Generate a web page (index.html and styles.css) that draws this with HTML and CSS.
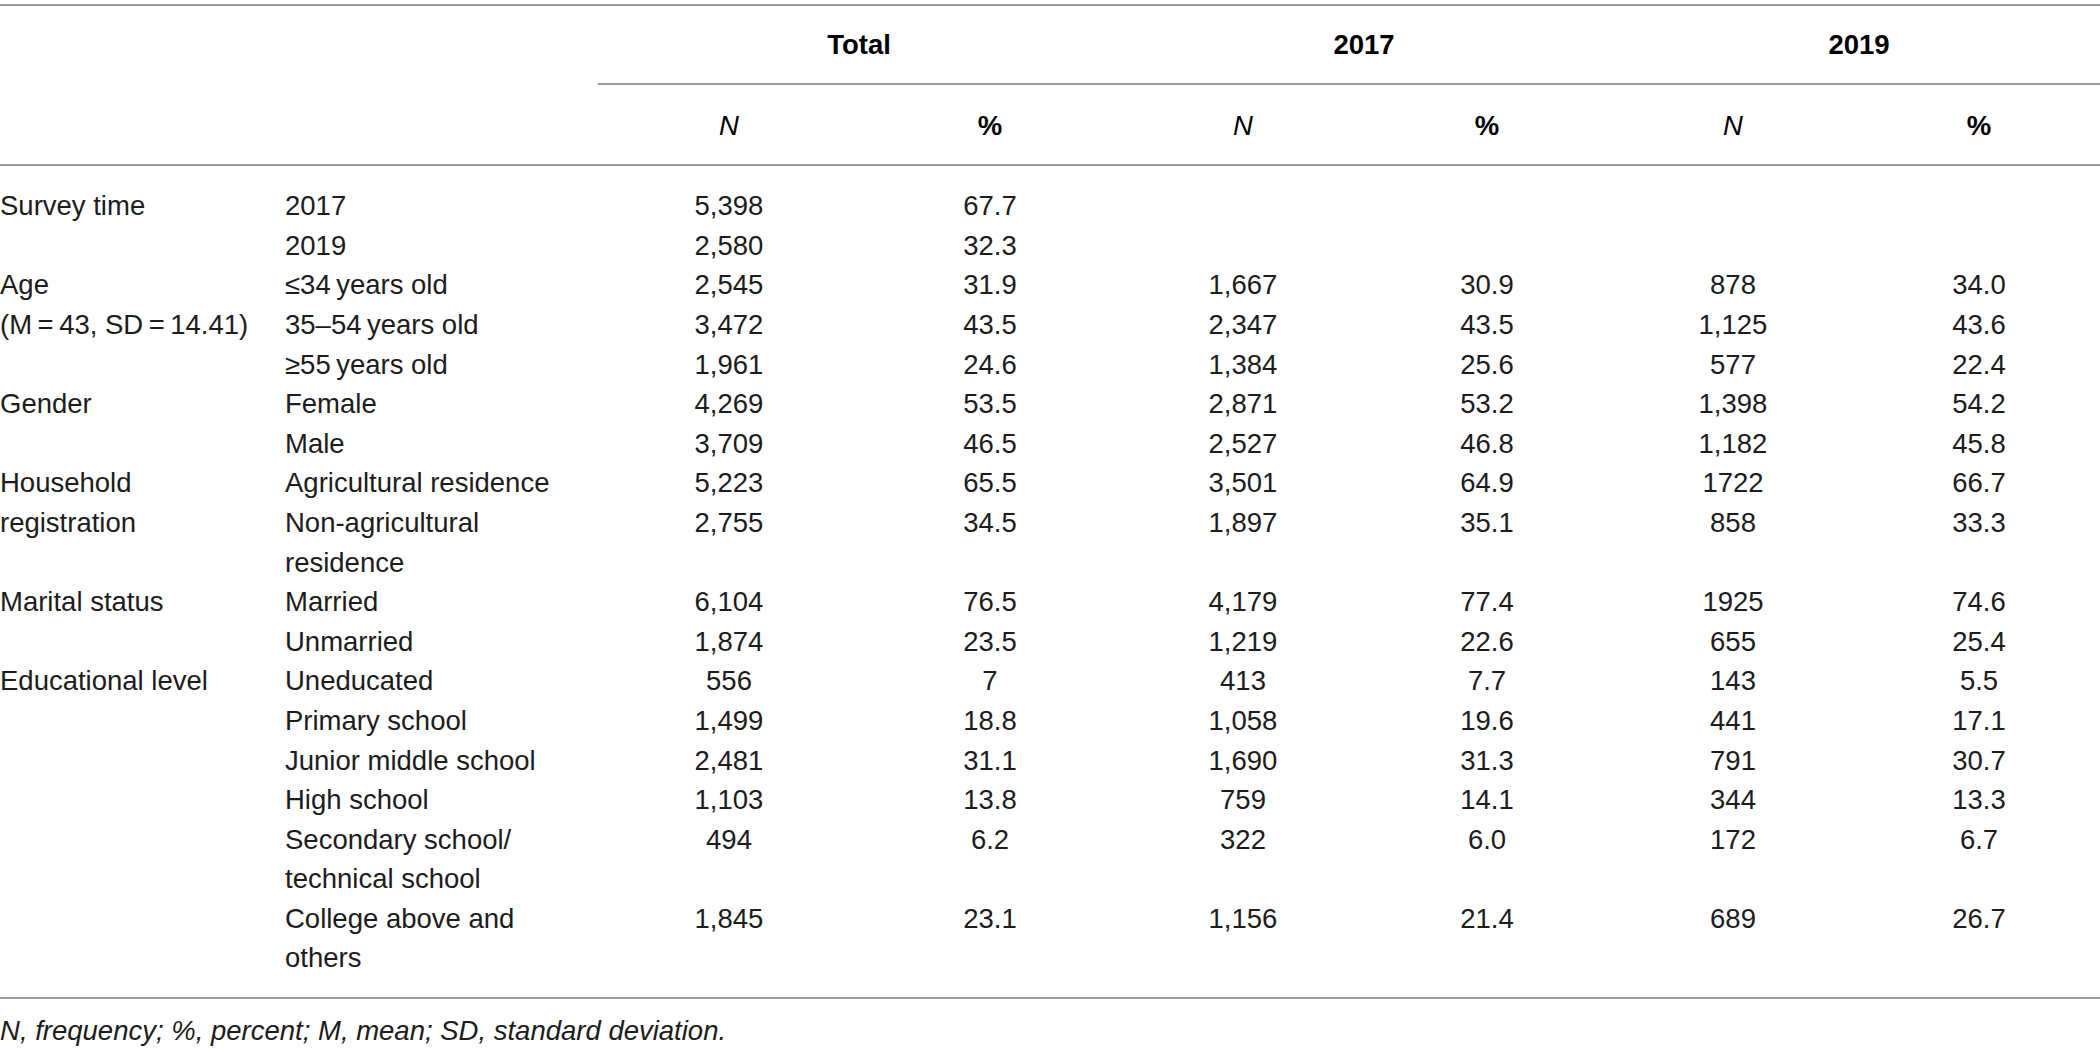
FILE: index.html
```html
<!DOCTYPE html>
<html lang="en">
<head>
<meta charset="utf-8">
<title>Sample characteristics</title>
<link rel="stylesheet" href="styles.css">
</head>
<body>
<div class="page">
<table class="stats">
  <colgroup>
    <col class="c-cat">
    <col class="c-sub">
    <col class="c-a">
    <col class="c-b">
    <col class="c-c">
    <col class="c-d">
    <col class="c-e">
    <col class="c-f">
  </colgroup>
  <thead>
    <tr class="group-row">
      <th colspan="2" rowspan="2" class="blank"></th>
      <th colspan="2" class="group">Total</th>
      <th colspan="2" class="group">2017</th>
      <th colspan="2" class="group group-last">2019</th>
    </tr>
    <tr class="sub-row">
      <th class="n">N</th><th class="pct">%</th>
      <th class="n">N</th><th class="pct">%</th>
      <th class="n">N</th><th class="pct">%</th>
    </tr>
  </thead>
  <tbody>
    <tr class="first">
      <td class="cat" rowspan="2">Survey time</td>
      <td class="sub">2017</td>
      <td>5,398</td><td>67.7</td><td></td><td></td><td></td><td></td>
    </tr>
    <tr>
      <td class="sub">2019</td>
      <td>2,580</td><td>32.3</td><td></td><td></td><td></td><td></td>
    </tr>
    <tr>
      <td class="cat" rowspan="3">Age<br>(M&thinsp;=&thinsp;43, SD&thinsp;=&thinsp;14.41)</td>
      <td class="sub">≤34&thinsp;years old</td>
      <td>2,545</td><td>31.9</td><td>1,667</td><td>30.9</td><td>878</td><td>34.0</td>
    </tr>
    <tr>
      <td class="sub">35–54&thinsp;years old</td>
      <td>3,472</td><td>43.5</td><td>2,347</td><td>43.5</td><td>1,125</td><td>43.6</td>
    </tr>
    <tr>
      <td class="sub">≥55&thinsp;years old</td>
      <td>1,961</td><td>24.6</td><td>1,384</td><td>25.6</td><td>577</td><td>22.4</td>
    </tr>
    <tr>
      <td class="cat" rowspan="2">Gender</td>
      <td class="sub">Female</td>
      <td>4,269</td><td>53.5</td><td>2,871</td><td>53.2</td><td>1,398</td><td>54.2</td>
    </tr>
    <tr>
      <td class="sub">Male</td>
      <td>3,709</td><td>46.5</td><td>2,527</td><td>46.8</td><td>1,182</td><td>45.8</td>
    </tr>
    <tr>
      <td class="cat" rowspan="2">Household registration</td>
      <td class="sub">Agricultural residence</td>
      <td>5,223</td><td>65.5</td><td>3,501</td><td>64.9</td><td>1722</td><td>66.7</td>
    </tr>
    <tr>
      <td class="sub">Non-agricultural residence</td>
      <td>2,755</td><td>34.5</td><td>1,897</td><td>35.1</td><td>858</td><td>33.3</td>
    </tr>
    <tr>
      <td class="cat" rowspan="2">Marital status</td>
      <td class="sub">Married</td>
      <td>6,104</td><td>76.5</td><td>4,179</td><td>77.4</td><td>1925</td><td>74.6</td>
    </tr>
    <tr>
      <td class="sub">Unmarried</td>
      <td>1,874</td><td>23.5</td><td>1,219</td><td>22.6</td><td>655</td><td>25.4</td>
    </tr>
    <tr>
      <td class="cat" rowspan="6">Educational level</td>
      <td class="sub">Uneducated</td>
      <td>556</td><td>7</td><td>413</td><td>7.7</td><td>143</td><td>5.5</td>
    </tr>
    <tr>
      <td class="sub">Primary school</td>
      <td>1,499</td><td>18.8</td><td>1,058</td><td>19.6</td><td>441</td><td>17.1</td>
    </tr>
    <tr>
      <td class="sub">Junior middle school</td>
      <td>2,481</td><td>31.1</td><td>1,690</td><td>31.3</td><td>791</td><td>30.7</td>
    </tr>
    <tr>
      <td class="sub">High school</td>
      <td>1,103</td><td>13.8</td><td>759</td><td>14.1</td><td>344</td><td>13.3</td>
    </tr>
    <tr>
      <td class="sub">Secondary school/ technical school</td>
      <td>494</td><td>6.2</td><td>322</td><td>6.0</td><td>172</td><td>6.7</td>
    </tr>
    <tr class="last">
      <td class="sub">College above and others</td>
      <td>1,845</td><td>23.1</td><td>1,156</td><td>21.4</td><td>689</td><td>26.7</td>
    </tr>
  </tbody>
</table>
<p class="note"><i>N</i>, frequency; %, percent; <i>M</i>, mean; <i>SD</i>, standard deviation.</p>
</div>
</body>
</html>
```

FILE: styles.css
```css
html, body {
  margin: 0;
  padding: 0;
  background: #ffffff;
}

.page {
  width: 2100px;
  padding-top: 4px;
  font-family: "Liberation Sans", Arial, Helvetica, sans-serif;
  font-size: 27.5px;
  line-height: 39.6px;
  color: #1c1c1c;
}

.stats {
  width: 2100px;
  table-layout: fixed;
  border-collapse: collapse;
  border-top: 2px solid #9c9c9c;
  border-bottom: 2px solid #9c9c9c;
}

.c-cat { width: 285px; }
.c-sub { width: 313px; }
.c-a { width: 262px; }
.c-b { width: 260px; }
.c-c { width: 246px; }
.c-d { width: 242px; }
.c-e { width: 250px; }
.c-f { width: 242px; }

.stats th,
.stats td {
  padding: 0;
  text-align: center;
  vertical-align: top;
  font-weight: normal;
}

.stats thead th {
  padding: 21px 0 19px 0;
  color: #000;
}

.stats .group-row th {
  padding: 19px 0 18px 0;
}

.group-row .group {
  font-weight: bold;
  border-bottom: 2px solid #9c9c9c;
}

.stats .group-row .group-last {
  padding-left: 10px;
}

.sub-row th {
  border-bottom: 2px solid #9c9c9c;
}

.sub-row .n {
  font-style: italic;
}

.sub-row .pct {
  font-weight: bold;
}

.stats .blank {
  border-bottom: 2px solid #9c9c9c;
}

.stats td.cat,
.stats td.sub {
  text-align: left;
  padding-right: 20px;
}

.stats tr.first td {
  padding-top: 20px;
}

.stats tr.last td {
  padding-bottom: 19px;
}

.note {
  margin: 12px 0 0 0;
  font-style: italic;
}
```
